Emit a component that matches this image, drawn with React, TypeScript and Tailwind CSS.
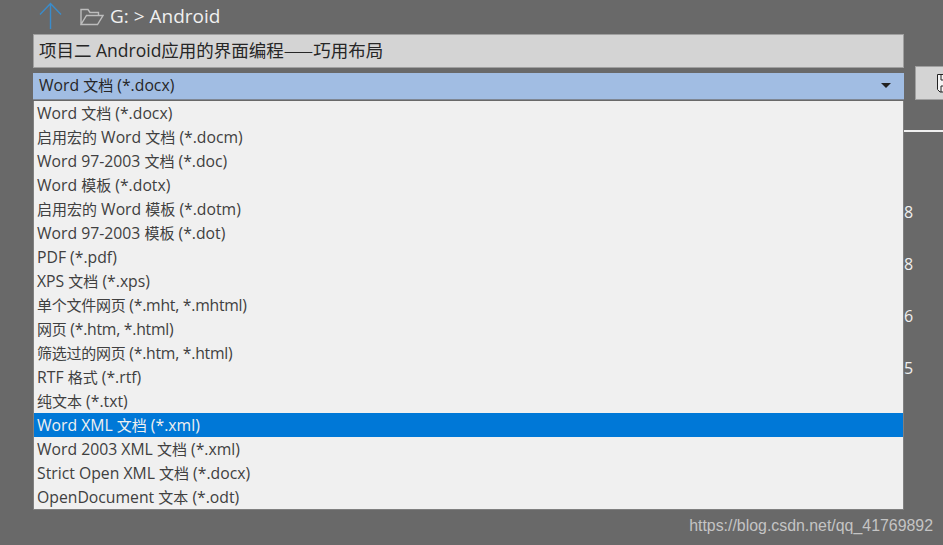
import React from "react";

const fileTypes = [
  "Word 文档 (*.docx)",
  "启用宏的 Word 文档 (*.docm)",
  "Word 97-2003 文档 (*.doc)",
  "Word 模板 (*.dotx)",
  "启用宏的 Word 模板 (*.dotm)",
  "Word 97-2003 模板 (*.dot)",
  "PDF (*.pdf)",
  "XPS 文档 (*.xps)",
  "单个文件网页 (*.mht, *.mhtml)",
  "网页 (*.htm, *.html)",
  "筛选过的网页 (*.htm, *.html)",
  "RTF 格式 (*.rtf)",
  "纯文本 (*.txt)",
  "Word XML 文档 (*.xml)",
  "Word 2003 XML 文档 (*.xml)",
  "Strict Open XML 文档 (*.docx)",
  "OpenDocument 文本 (*.odt)",
];

const font = "font-['Open_Sans','Noto_Sans_CJK_SC',sans-serif]";

// the Chinese runs sit a little smaller than the latin ones in the original
const Label = ({ text, className }: { text: string; className?: string }) => (
  <span className={className}>
    {text.split(/([\u4e00-\u9fff]+)/).map((part, index) => (
      <span key={index} className={index % 2 === 1 ? "text-[15px]" : "text-[15.750px]"}>
        {part}
      </span>
    ))}
  </span>
);

const App = () => {
  return (
    <div className={`w-[943px] h-[545px] bg-[#696969] overflow-hidden relative ${font}`}>
      <div className="h-[34px] flex items-center pl-[39px]">
        <svg width="24" height="30" viewBox="0 0 24 30" fill="none" stroke="#3a8ccb" strokeWidth="1.4">
          <path d="M11.500 27V1.500M1 12.500 11.500 1.500 22 12.500" />
        </svg>
        <svg className="ml-[17px]" width="24" height="18" viewBox="0 0 24 18" fill="none" stroke="#bdbdbd" strokeWidth="1.4">
          <path d="M1 16.500V1.500h7l2 3h8.500v3M1 16.500h16.500l5.500-9H6.500L1 16.500Z" />
        </svg>
        <span className="ml-[6px] text-[19px] text-[#f0f0f0] mb-[2px]">G: &gt; Android</span>
      </div>

      <div className="flex">
        <div className="ml-[33px] w-[871px]">
          <div className="h-[34px] bg-[#d4d4d4] border border-[#a0a0a0] flex items-center pl-[5px] pb-[2px] text-[17.500px] text-[#262626]">
            <span>
              项目二 Android应用的界面编程
              <span className="font-['Noto_Sans_CJK_SC',sans-serif]">——</span>
              巧用布局
            </span>
          </div>
          <div className="mt-[5px] h-[27px] bg-[#a1bde3] border-b border-[#7f8794] flex items-center justify-between pl-[6px] pr-[13px] pb-px text-[#262626]">
            <Label text="Word 文档 (*.docx)" />
            <span className="w-0 h-0 border-x-[5px] border-x-transparent border-t-[5px] border-t-[#222222]" />
          </div>
          <ul className="mt-[1px] h-[409px] bg-[#f0f0f0] border-x border-b border-[#808080] text-[#404040]">
            {fileTypes.map((item, index) => (
              <li
                key={index}
                className={
                  index === 13
                    ? "h-[24px] flex items-center pl-[3px] bg-[#0078d7] text-[#f0f0f0]"
                    : "h-[24px] flex items-center pl-[3px]"
                }
              >
                <Label text={item} className={index >= 8 && index <= 10 ? "tracking-[-0.25px]" : ""} />
              </li>
            ))}
          </ul>
        </div>

        <div className="flex-1 min-w-0 pt-[32px] text-[#f0f0f0] text-[16px]">
          <div className="ml-[11px] h-[34px] w-[40px] bg-[#d4d4d4] border border-[#a0a0a0] flex items-center pl-[20px]">
            <svg width="12" height="21" viewBox="0 0 12 21" fill="#f4f4f4" stroke="#222222" strokeWidth="1" className="shrink-0">
              <path d="M1.500 1.500H12V19H4l-2.500-2.500Z" />
              <path d="M5 1.500V7h7M5 19v-6h7" fill="none" />
            </svg>
          </div>
          <div className="mt-[30px] h-[2px] bg-[#f0f0f0]" />
          <div className="mt-[70px] flex flex-col gap-[32px] leading-[20px]">
            <span>8</span>
            <span>8</span>
            <span>6</span>
            <span>5</span>
          </div>
        </div>
      </div>

      <span className="absolute right-[10px] top-[514px] font-['Liberation_Sans',sans-serif] text-[15.900px] text-[#c4c4c4]">
        https://blog.csdn.net/qq_41769892
      </span>
    </div>
  );
};

export default App;
